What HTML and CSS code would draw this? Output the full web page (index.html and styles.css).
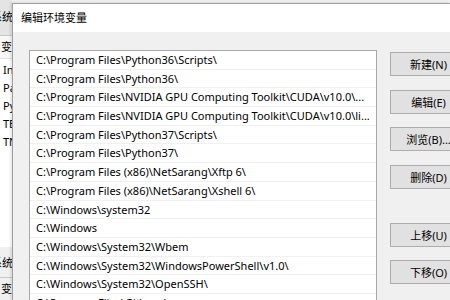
FILE: index.html
```html
<!DOCTYPE html>
<html lang="zh-CN">
<head>
    <meta charset="UTF-8">
    <title>编辑环境变量</title>
    <link rel="stylesheet" href="styles.css">
</head>
<body>
    <!-- Window behind the dialog (only its right edge shows) -->
    <div class="backwin">
        <div class="bw-title"><span class="cut">系统</span></div>
        <div class="bw-head">变</div>
        <div class="bw-rows">
            <div class="bw-row">In</div>
            <div class="bw-row">Pa</div>
            <div class="bw-row">Py</div>
            <div class="bw-row">TE</div>
            <div class="bw-row">TN</div>
        </div>
        <div class="bw-sys"><span class="cut">系统</span></div>
        <div class="bw-head2">变</div>
    </div>

    <!-- Edit environment variable dialog -->
    <div class="dialog">
        <div class="titlebar">编辑环境变量</div>
        <div class="content">
            <ul class="pathlist">
                <li>C:\Program Files\Python36\Scripts\</li>
                <li>C:\Program Files\Python36\</li>
                <li>C:\Program Files\NVIDIA GPU Computing Toolkit\CUDA\v10.0\...</li>
                <li>C:\Program Files\NVIDIA GPU Computing Toolkit\CUDA\v10.0\li...</li>
                <li>C:\Program Files\Python37\Scripts\</li>
                <li>C:\Program Files\Python37\</li>
                <li>C:\Program Files (x86)\NetSarang\Xftp 6\</li>
                <li>C:\Program Files (x86)\NetSarang\Xshell 6\</li>
                <li>C:\Windows\system32</li>
                <li>C:\Windows</li>
                <li>C:\Windows\System32\Wbem</li>
                <li>C:\Windows\System32\WindowsPowerShell\v1.0\</li>
                <li>C:\Windows\System32\OpenSSH\</li>
                <li>C:\Program Files\Git\cmd</li>
            </ul>
            <div class="actions">
                <button>新建(N)</button>
                <button>编辑(E)</button>
                <button>浏览(B)...</button>
                <button>删除(D)</button>
                <button class="move-up">上移(U)</button>
                <button>下移(O)</button>
            </div>
        </div>
    </div>
</body>
</html>
```

FILE: styles.css
```css
html, body {
    margin: 0;
    height: 300px;
    overflow: hidden;
}
body {
    display: flex;
    font-family: "Noto Sans", "Noto Sans CJK SC", sans-serif;
    font-size: 11px;
    color: #000;
    background-color: #f0f0f0;
}

/* Window behind the dialog */
.backwin {
    width: 12px;
    flex: none;
    overflow: hidden;
    background-color: #fafafa;
    display: flex;
    flex-direction: column;
}
.bw-title {
    height: 36px;
    line-height: 34px;
    background-color: #e4e4e4;
    border-bottom: 1px solid #c8c8c8;
    box-sizing: border-box;
    white-space: nowrap;
}
.cut {
    display: inline-block;
    margin-left: -9px;
}
.bw-head {
    height: 22px;
    line-height: 22px;
    padding-left: 1px;
    border-bottom: 1px solid #e0e0e0;
    background-color: #f7f7f7;
}
.bw-rows {
    background-color: #ffffff;
    height: 186px;
    padding-top: 2px;
}
.bw-row {
    height: 18px;
    line-height: 18px;
    padding-left: 3px;
}
.bw-sys {
    flex: 1;
    display: flex;
    align-items: center;
    white-space: nowrap;
    border-bottom: 1px solid #c8c8c8;
    background-color: #f0f0f0;
}
.bw-head2 {
    height: 22px;
    line-height: 22px;
    padding-left: 1px;
    background-color: #f0f0f0;
}

/* Dialog */
.dialog {
    flex: 1;
    margin-top: 3px;
    border-top: 1px solid #a0a0a0;
    border-left: 1px solid #a0a0a0;
    box-shadow: -1px 0 3px rgba(0, 0, 0, 0.15);
    background-color: #f0f0f0;
    min-width: 0;
    overflow: hidden;
}
.titlebar {
    height: 28px;
    line-height: 27px;
    padding-left: 8px;
    background-color: #ffffff;
    font-size: 11px;
}
.content {
    display: flex;
    align-items: flex-start;
    padding: 18px 0 0 16px;
}

/* Path list */
.pathlist {
    list-style: none;
    margin: 0;
    padding: 0;
    width: 346px;
    flex: none;
    height: 260px;
    background-color: #ffffff;
    border: 1px solid #a8a8a8;
    border-bottom: none;
}
.pathlist li {
    height: 17.7px;
    line-height: 17.7px;
    padding: 0 4px 0 6px;
    border-bottom: 1px solid #f0f0f0;
    white-space: nowrap;
    overflow: hidden;
    text-overflow: ellipsis;
}

/* Buttons */
.actions {
    display: flex;
    flex-direction: column;
    gap: 13.7px;
    margin: 2px 0 0 13px;
}
.actions button {
    width: 77px;
    height: 24px;
    padding: 0;
    font-family: inherit;
    font-size: 11px;
    color: #000;
    background-color: #e1e1e1;
    border: 1px solid #adadad;
    border-radius: 0;
}
.actions .move-up {
    margin-top: 20px;
}
```
